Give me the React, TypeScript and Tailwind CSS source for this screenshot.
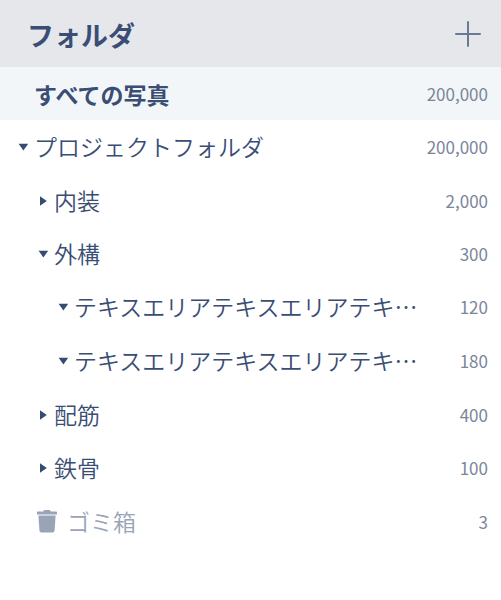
import { useState } from "react";

type Folder = {
  id: string;
  name: string;
  count: string;
  level: 0 | 1 | 2;
  open: boolean;
  height: string;
};

const folders: Folder[] = [
  { id: "project", name: "プロジェクトフォルダ", count: "200,000", level: 0, open: true, height: "h-[54px]" },
  { id: "interior", name: "内装", count: "2,000", level: 1, open: false, height: "h-[53px]" },
  { id: "exterior", name: "外構", count: "300", level: 1, open: true, height: "h-[53px]" },
  { id: "text-1", name: "テキスエリアテキスエリアテキ…", count: "120", level: 2, open: true, height: "h-[54px]" },
  { id: "text-2", name: "テキスエリアテキスエリアテキ…", count: "180", level: 2, open: true, height: "h-[54px]" },
  { id: "rebar", name: "配筋", count: "400", level: 1, open: false, height: "h-[53px]" },
  { id: "steel", name: "鉄骨", count: "100", level: 1, open: false, height: "h-[54px]" },
];

const indents = ["pl-[18px]", "pl-[38px]", "pl-[58px]"];

function Arrow({ open }: { open: boolean }) {
  return (
    <svg viewBox="0 0 12 12" className="size-3 fill-[#344b72]" aria-hidden="true">
      {open ? <path d="M.6 2.8H10.2L5.4 9.4Z" /> : <path d="M2 1.2V10.8L8.8 6Z" />}
    </svg>
  );
}

function Count({ value }: { value: string }) {
  return <span className="ml-auto shrink-0 text-[17px] leading-6 text-[#7b869b]">{value}</span>;
}

function FolderRow({ folder }: { folder: Folder }) {
  const [open, setOpen] = useState(folder.open);
  return (
    <li className={`flex items-center pr-[13px] ${folder.height} ${indents[folder.level]}`}>
      <button
        type="button"
        aria-label={folder.name}
        aria-expanded={open}
        onClick={() => setOpen(!open)}
        className="mr-1 shrink-0"
      >
        <Arrow open={open} />
      </button>
      <span className="truncate pb-0.5 text-[23px] leading-8 font-[350]">{folder.name}</span>
      <Count value={folder.count} />
    </li>
  );
}

export default function App() {
  return (
    <nav
      lang="ja"
      className="min-h-screen bg-white font-['Noto_Sans_CJK_JP',sans-serif] text-[#3a4d74]"
    >
      <header className="flex h-[67px] items-center justify-between bg-[#e5e7eb] pr-5 pl-[27px]">
        <h1 className="pt-0.5 text-[27px] leading-9 font-bold">フォルダ</h1>
        <button type="button" aria-label="フォルダを追加">
          <svg viewBox="0 0 26 26" className="size-[26px] stroke-[#6b7a94]" fill="none" strokeWidth="2" strokeLinecap="round" aria-hidden="true">
            <path d="M13 1V25M1 13H25" />
          </svg>
        </button>
      </header>
      <ul>
        <li className="flex h-[53px] items-center bg-[#f3f6f8] pr-[13px] pl-[34px]">
          <span className="text-[23px] leading-8 font-bold">すべての写真</span>
          <Count value="200,000" />
        </li>
        {folders.map((folder) => (
          <FolderRow key={folder.id} folder={folder} />
        ))}
        <li className="flex h-[54px] items-center pr-[13px] pl-[36px]">
          <svg viewBox="0 0 22 24" className="mr-[9px] h-6 w-[22px] shrink-0 fill-[#9aa4b9]" aria-hidden="true">
            <path d="M7.5 1Q7.7 0 8.5 0H13.5Q14.3 0 14.5 1L14.8 1.4H20.2Q21 1.4 21 2.2V4.4H1V2.2Q1 1.4 1.8 1.4H7.2Z" />
            <path d="M2.4 5.6H19.6L18.6 20.6Q18.4 22.6 16.4 22.6H5.6Q3.6 22.6 3.4 20.6Z" />
          </svg>
          <span className="pb-0.5 text-[23px] leading-8 font-[350] text-[#9aa4b9]">ゴミ箱</span>
          <Count value="3" />
        </li>
      </ul>
    </nav>
  );
}
